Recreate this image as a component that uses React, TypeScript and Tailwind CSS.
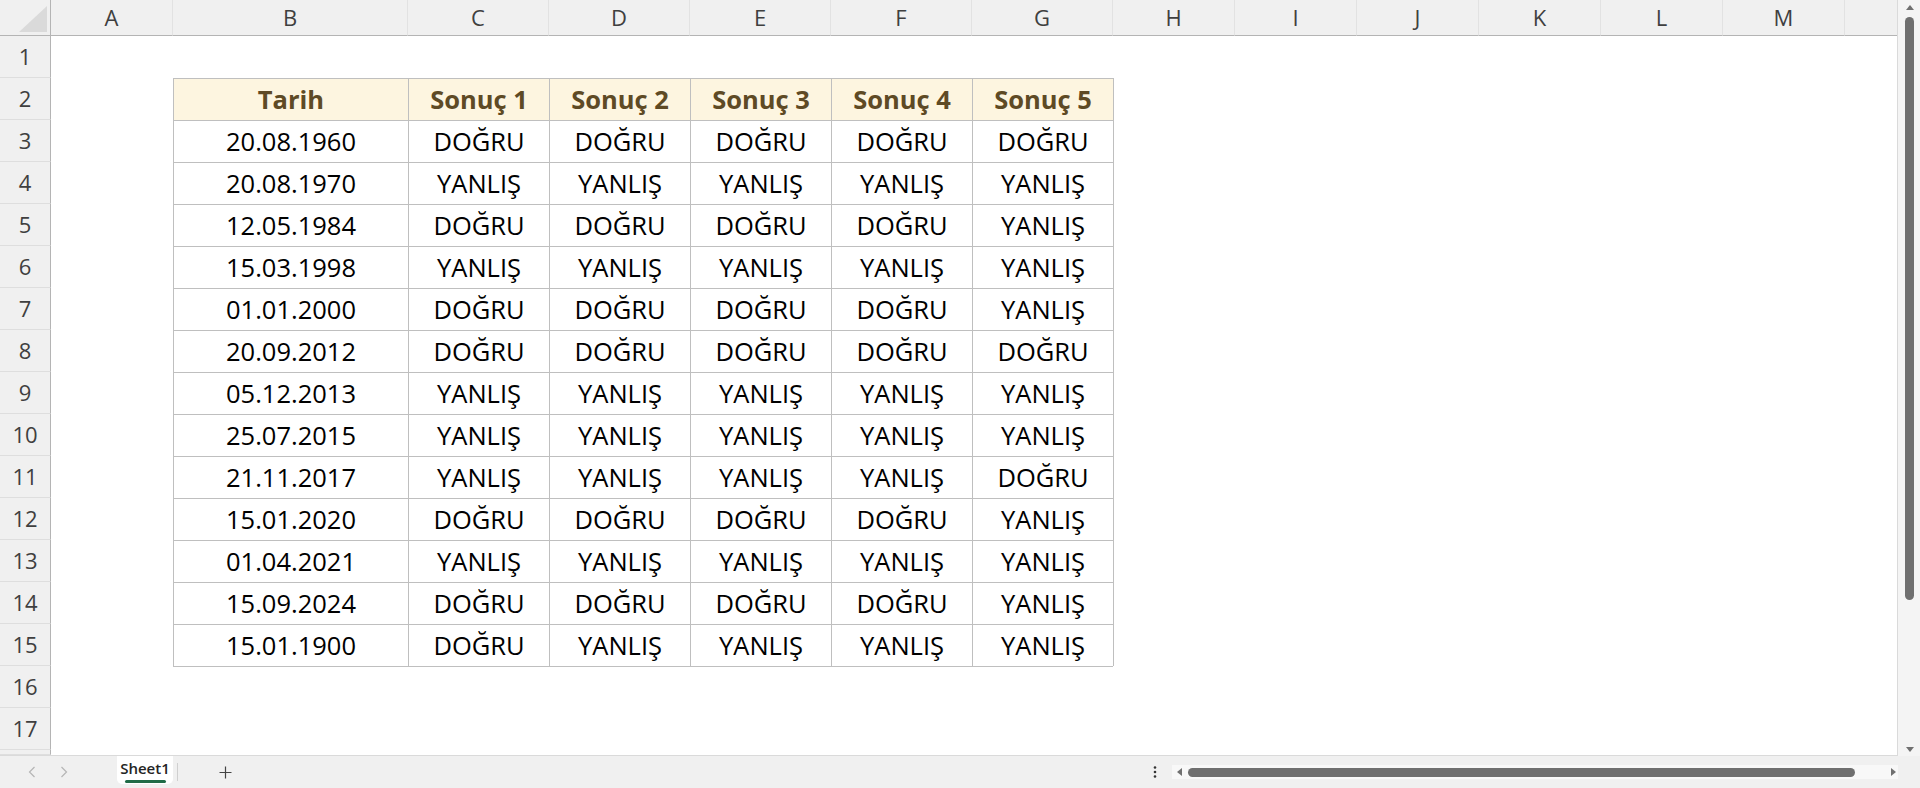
import React from "react";

const D = "DOĞRU";
const Y = "YANLIŞ";

const data: [string, string[]][] = [
  ["20.08.1960", [D, D, D, D, D]],
  ["20.08.1970", [Y, Y, Y, Y, Y]],
  ["12.05.1984", [D, D, D, D, Y]],
  ["15.03.1998", [Y, Y, Y, Y, Y]],
  ["01.01.2000", [D, D, D, D, Y]],
  ["20.09.2012", [D, D, D, D, D]],
  ["05.12.2013", [Y, Y, Y, Y, Y]],
  ["25.07.2015", [Y, Y, Y, Y, Y]],
  ["21.11.2017", [Y, Y, Y, Y, D]],
  ["15.01.2020", [D, D, D, D, Y]],
  ["01.04.2021", [Y, Y, Y, Y, Y]],
  ["15.09.2024", [D, D, D, D, Y]],
  ["15.01.1900", [D, Y, Y, Y, Y]],
];

const letters = ["A", "B", "C", "D", "E", "F", "G", "H", "I", "J", "K", "L", "M", ""];
const headers = ["Tarih", "Sonuç 1", "Sonuç 2", "Sonuç 3", "Sonuç 4", "Sonuç 5"];

function Cell({ r, c }: { r: number; c: number }) {
  // c: 0 = A ... 13 = N
  const inTable = r >= 2 && r <= 15 && c >= 1 && c <= 6;
  const below = r === 16 && c >= 1 && c <= 6;
  const rightOf = r >= 2 && r <= 15 && c === 7;
  let cls = "flex items-center justify-center overflow-hidden whitespace-nowrap";
  let content: React.ReactNode = null;
  if (inTable) {
    cls += " border-t border-l border-[#bfbfbf]";
    if (r === 2) {
      cls += " bg-[#fdf5e0] font-bold text-[#5e4a25] text-[25.5px]";
      content = headers[c - 1];
    } else {
      cls += " text-black text-[25.5px]";
      const row = data[r - 3];
      content = c === 1 ? row[0] : row[1][c - 2];
    }
  } else if (below) {
    cls += " border-t border-[#bfbfbf]";
  } else if (rightOf) {
    cls += " border-l border-[#bfbfbf]";
  }
  return <div className={cls}>{content}</div>;
}

export default function App() {
  const rows = Array.from({ length: 18 }, (_, i) => i + 1);
  return (
    <div
      className="w-[1920px] h-[788px] overflow-hidden flex flex-col bg-[#f0f0f0]"
      style={{ fontFamily: '"Open Sans", "Noto Sans", sans-serif' }}
    >
      <div className="flex h-[756px]">
        <div className="w-[1898px] h-full bg-white border-r border-b border-[#dadada] grid grid-cols-[51px_122px_235px_141px_141px_141px_141px_141px_122px_122px_122px_122px_122px_122px_1fr] grid-rows-[36px_repeat(17,42px)_1fr] overflow-hidden">
          {/* corner */}
          <div className="bg-[#f0f0f0] border-r border-b border-[#b4b4b4] flex items-end justify-end pr-[3px] pb-[3px]">
            <svg width="28" height="26" viewBox="0 0 28 26">
              <polygon points="0,26 28,26 28,0" fill="#dadada" />
            </svg>
          </div>
          {letters.map((l, i) => (
            <div
              key={"h" + i}
              className={
                "bg-[#f0f0f0] border-b border-[#b4b4b4] flex items-center justify-center text-[22px] text-[#3f3f3f]" +
                (i < 13 ? " border-r-[1px] border-r-[#e2e2e2]" : "")
              }
            >
              {l}
            </div>
          ))}
          {rows.map((r) => (
            <React.Fragment key={"r" + r}>
              <div className="bg-[#f0f0f0] border-r border-r-[#b4b4b4] border-b border-b-[#dedede] flex items-center justify-center text-[22px] text-[#3f3f3f]">
                {r <= 17 ? r : ""}
              </div>
              {letters.map((_, c) => (
                <Cell key={"c" + r + "-" + c} r={r} c={c} />
              ))}
            </React.Fragment>
          ))}
        </div>
        {/* vertical scrollbar */}
        <div className="flex-1 bg-[#f4f4f4] flex flex-col items-center">
          <svg className="mt-[5px] ml-[1px]" width="8" height="5" viewBox="0 0 8 5">
            <polygon points="0,5 8,5 4,0" fill="#707070" />
          </svg>
          <div className="mt-[7px] ml-[1px] w-[9px] h-[583px] rounded-full bg-[#6f6f6f]" />
          <div className="flex-1" />
          <svg className="mb-[4px] ml-[1px]" width="8" height="5" viewBox="0 0 8 5">
            <polygon points="0,0 8,0 4,5" fill="#707070" />
          </svg>
        </div>
      </div>
      {/* bottom bar */}
      <div className="h-[32px] flex items-center bg-[#f0f0f0]">
        <div className="w-[117px] flex items-center pl-[28px] gap-[24px]">
          <svg width="8" height="12" viewBox="0 0 8 12">
            <polyline points="6.5,1 1.5,6 6.5,11" fill="none" stroke="#b5b5b5" strokeWidth="1.2" />
          </svg>
          <svg width="8" height="12" viewBox="0 0 8 12">
            <polyline points="1.5,1 6.5,6 1.5,11" fill="none" stroke="#b5b5b5" strokeWidth="1.2" />
          </svg>
        </div>
        <div className="self-start w-[56px] h-[28px] bg-white rounded-b-[5px] flex flex-col items-center justify-center pt-[1px]">
          <span className="text-[15px] leading-[18px] font-semibold text-[#242424]">Sheet1</span>
          <div className="mt-[3px] w-[41px] h-[3px] rounded-full bg-[#1f6b47]" />
        </div>
        <div className="ml-[4px] w-px h-[18px] bg-[#cfcfcf]" />
        <svg className="ml-[41px]" width="13" height="13" viewBox="0 0 13 13">
          <path d="M6.5 0.5v12M0.5 6.5h12" stroke="#444" strokeWidth="1.2" fill="none" />
        </svg>
        <div className="flex-1" />
        <div className="w-[770px] flex items-center">
          <svg width="10" height="14" viewBox="0 0 10 14">
            <circle cx="5" cy="2.5" r="1.3" fill="#333" />
            <circle cx="5" cy="7" r="1.3" fill="#333" />
            <circle cx="5" cy="11.5" r="1.3" fill="#333" />
          </svg>
          <div className="ml-[12px] w-[726px] h-[14px] bg-[#f8f8f8] flex items-center">
            <svg className="ml-[5px]" width="5" height="8" viewBox="0 0 5 8">
              <polygon points="5,0 5,8 0,4" fill="#707070" />
            </svg>
            <div className="ml-[6px] w-[667px] h-[9px] rounded-full bg-[#6f6f6f]" />
            <svg className="ml-[36px]" width="5" height="8" viewBox="0 0 5 8">
              <polygon points="0,0 0,8 5,4" fill="#707070" />
            </svg>
          </div>
        </div>
      </div>
    </div>
  );
}
